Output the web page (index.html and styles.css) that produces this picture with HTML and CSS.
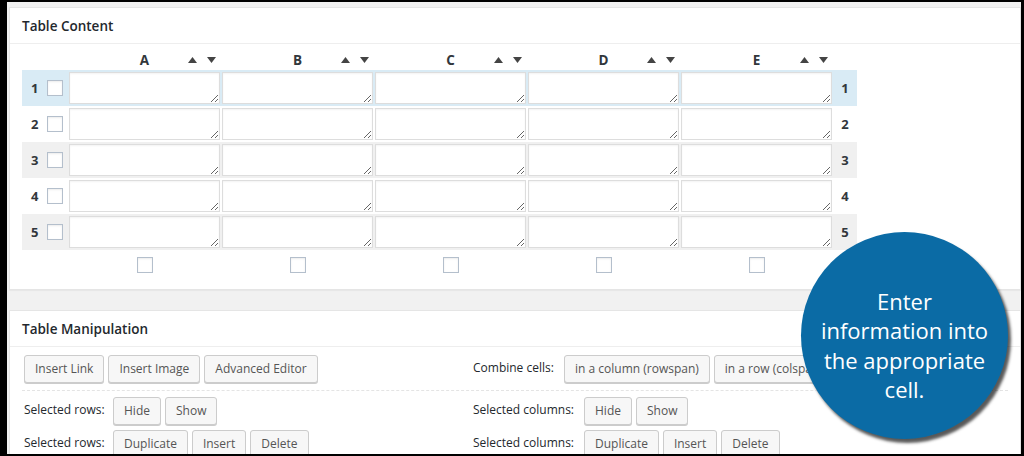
FILE: index.html
```html
<!DOCTYPE html>
<html lang="en">
<head>
<meta charset="utf-8">
<title>Table Content</title>
<link rel="stylesheet" href="styles.css">
</head>
<body>
<div class="frame">
  <section class="panel panel-content">
    <h2 class="panel-title">Table Content</h2>
    <div class="panel-body">
      <div class="tbl">
        <div class="head-row">
          <div class="lead"></div>
          <div class="col-head"><span class="letter">A</span><span class="sort"><svg width="9" height="6" viewBox="0 0 9 6"><polygon points="4.5,0 9,6 0,6"/></svg><svg width="9" height="6" viewBox="0 0 9 6"><polygon points="0,0 9,0 4.5,6"/></svg></span></div>
          <div class="col-head"><span class="letter">B</span><span class="sort"><svg width="9" height="6" viewBox="0 0 9 6"><polygon points="4.5,0 9,6 0,6"/></svg><svg width="9" height="6" viewBox="0 0 9 6"><polygon points="0,0 9,0 4.5,6"/></svg></span></div>
          <div class="col-head"><span class="letter">C</span><span class="sort"><svg width="9" height="6" viewBox="0 0 9 6"><polygon points="4.5,0 9,6 0,6"/></svg><svg width="9" height="6" viewBox="0 0 9 6"><polygon points="0,0 9,0 4.5,6"/></svg></span></div>
          <div class="col-head"><span class="letter">D</span><span class="sort"><svg width="9" height="6" viewBox="0 0 9 6"><polygon points="4.5,0 9,6 0,6"/></svg><svg width="9" height="6" viewBox="0 0 9 6"><polygon points="0,0 9,0 4.5,6"/></svg></span></div>
          <div class="col-head"><span class="letter">E</span><span class="sort"><svg width="9" height="6" viewBox="0 0 9 6"><polygon points="4.5,0 9,6 0,6"/></svg><svg width="9" height="6" viewBox="0 0 9 6"><polygon points="0,0 9,0 4.5,6"/></svg></span></div>
          <div class="tail"></div>
        </div>

        <div class="row row-active">
          <div class="lead"><span class="num">1</span><input type="checkbox" class="cb"></div>
          <div class="cell"><textarea></textarea></div>
          <div class="cell"><textarea></textarea></div>
          <div class="cell"><textarea></textarea></div>
          <div class="cell"><textarea></textarea></div>
          <div class="cell"><textarea></textarea></div>
          <div class="tail">1</div>
        </div>
        <div class="row">
          <div class="lead"><span class="num">2</span><input type="checkbox" class="cb"></div>
          <div class="cell"><textarea></textarea></div>
          <div class="cell"><textarea></textarea></div>
          <div class="cell"><textarea></textarea></div>
          <div class="cell"><textarea></textarea></div>
          <div class="cell"><textarea></textarea></div>
          <div class="tail">2</div>
        </div>
        <div class="row row-alt">
          <div class="lead"><span class="num">3</span><input type="checkbox" class="cb"></div>
          <div class="cell"><textarea></textarea></div>
          <div class="cell"><textarea></textarea></div>
          <div class="cell"><textarea></textarea></div>
          <div class="cell"><textarea></textarea></div>
          <div class="cell"><textarea></textarea></div>
          <div class="tail">3</div>
        </div>
        <div class="row">
          <div class="lead"><span class="num">4</span><input type="checkbox" class="cb"></div>
          <div class="cell"><textarea></textarea></div>
          <div class="cell"><textarea></textarea></div>
          <div class="cell"><textarea></textarea></div>
          <div class="cell"><textarea></textarea></div>
          <div class="cell"><textarea></textarea></div>
          <div class="tail">4</div>
        </div>
        <div class="row row-alt">
          <div class="lead"><span class="num">5</span><input type="checkbox" class="cb"></div>
          <div class="cell"><textarea></textarea></div>
          <div class="cell"><textarea></textarea></div>
          <div class="cell"><textarea></textarea></div>
          <div class="cell"><textarea></textarea></div>
          <div class="cell"><textarea></textarea></div>
          <div class="tail">5</div>
        </div>

        <div class="foot-row">
          <div class="lead"></div>
          <div class="foot-cell"><input type="checkbox" class="cb"></div>
          <div class="foot-cell"><input type="checkbox" class="cb"></div>
          <div class="foot-cell"><input type="checkbox" class="cb"></div>
          <div class="foot-cell"><input type="checkbox" class="cb"></div>
          <div class="foot-cell"><input type="checkbox" class="cb"></div>
          <div class="tail"></div>
        </div>
      </div>
    </div>
  </section>

  <section class="panel panel-manip">
    <h2 class="panel-title">Table Manipulation</h2>
    <div class="manip">
      <div class="manip-row manip-row-first">
        <div class="manip-col">
          <button class="btn">Insert Link</button>
          <button class="btn">Insert Image</button>
          <button class="btn">Advanced Editor</button>
        </div>
        <div class="manip-col">
          <span class="label label-combine">Combine cells:</span>
          <button class="btn">in a column (rowspan)</button>
          <button class="btn">in a row (colspan)</button>
        </div>
      </div>
      <div class="manip-row manip-row-second">
        <div class="manip-col">
          <span class="label label-rows">Selected rows:</span>
          <button class="btn">Hide</button>
          <button class="btn">Show</button>
        </div>
        <div class="manip-col">
          <span class="label label-cols">Selected columns:</span>
          <button class="btn">Hide</button>
          <button class="btn">Show</button>
        </div>
      </div>
      <div class="manip-row">
        <div class="manip-col">
          <span class="label label-rows">Selected rows:</span>
          <button class="btn">Duplicate</button>
          <button class="btn">Insert</button>
          <button class="btn">Delete</button>
        </div>
        <div class="manip-col">
          <span class="label label-cols">Selected columns:</span>
          <button class="btn">Duplicate</button>
          <button class="btn">Insert</button>
          <button class="btn">Delete</button>
        </div>
      </div>
    </div>
  </section>
</div>

<div class="callout">
  <p class="callout-text">Enter information into the appropriate cell.</p>
</div>
</body>
</html>
```

FILE: styles.css
```css
html, body {
  margin: 0;
  padding: 0;
  height: 100%;
}

body {
  background: #000;
  font-family: "Open Sans", "Noto Sans", sans-serif;
  overflow: hidden;
}

.frame {
  margin: 2px 3px 0 7px;
  height: 452px;
  background: #f1f1f1;
  padding: 5px 0 0 2px;
  box-sizing: border-box;
  overflow: hidden;
}

.panel {
  background: #fff;
  border: 1px solid #e5e5e5;
  box-shadow: 0 1px 1px rgba(0, 0, 0, 0.04);
}

.panel-title {
  margin: 0;
  height: 33px;
  line-height: 33px;
  padding: 2px 0 0 12px;
  font-size: 13.5px;
  font-weight: 600;
  color: #23282d;
  border-bottom: 1px solid #eeeeee;
}

.panel-body {
  padding: 6px 12px 16px;
}

/* ---------- table ---------- */

.tbl {
  width: 835px;
}

.head-row,
.row,
.foot-row {
  display: flex;
}

.lead {
  width: 46px;
  flex: none;
  box-sizing: border-box;
  display: flex;
  align-items: center;
  padding: 0 5px 0 9px;
}

.tail {
  width: 24px;
  flex: none;
  text-align: center;
  font-size: 13px;
  font-weight: 700;
  color: #32373c;
  line-height: 36px;
}

.head-row {
  height: 20px;
}

.col-head {
  width: 153px;
  flex: none;
  display: grid;
  grid-template-columns: 1fr auto 1fr;
  align-items: center;
}

.letter {
  grid-column: 2;
  font-size: 13.5px;
  font-weight: 700;
  color: #32373c;
  line-height: 20px;
}

.sort {
  grid-column: 3;
  justify-self: end;
  display: flex;
  gap: 10px;
  padding-right: 5px;
}

.sort svg {
  display: block;
  fill: #444;
}

.row {
  height: 36px;
  align-items: center;
}

.row-active {
  background: #d9ebf5;
}

.row-alt {
  background: #f0f0f0;
}

.num {
  flex: 1;
  font-size: 13px;
  font-weight: 700;
  color: #32373c;
}

.cb {
  -webkit-appearance: none;
  appearance: none;
  margin: 0;
  width: 16px;
  height: 16px;
  box-sizing: border-box;
  border: 1px solid #b4bfcc;
  background: #fff;
  box-shadow: inset 0 1px 2px rgba(0, 0, 0, 0.08);
}

.cell {
  width: 153px;
  flex: none;
  box-sizing: border-box;
  padding: 0 1px;
}

.cell textarea {
  display: block;
  margin: 0;
  width: 151px;
  height: 32px;
  box-sizing: border-box;
  border: 1px solid #dddddd;
  background: #fff;
  box-shadow: inset 0 1px 2px rgba(0, 0, 0, 0.05);
  padding: 2px 4px;
  font-family: inherit;
}

.foot-row {
  margin-top: 7px;
}

.foot-cell {
  width: 153px;
  flex: none;
  display: flex;
  justify-content: center;
}

/* ---------- manipulation ---------- */

.panel-manip {
  margin-top: 20px;
}

.manip {
  padding: 0 12px;
}

.manip-row {
  display: grid;
  grid-template-columns: 449px 1fr;
  padding-left: 2px;
}

.manip-row-first {
  padding-top: 8px;
  padding-bottom: 7px;
  border-bottom: 1px dashed #e4e4e4;
}

.manip-row-second {
  padding-top: 6px;
  padding-bottom: 5px;
}

.manip-col {
  display: flex;
  align-items: center;
  gap: 4px;
  white-space: nowrap;
}

.label {
  flex: none;
  font-size: 12px;
  color: #23282d;
  margin-top: -3px;
}

.label-rows {
  width: 85px;
}

.label-cols {
  width: 107px;
}

.label-combine {
  width: 87px;
}

.btn {
  flex: none;
  height: 28px;
  margin: 0;
  padding: 0 10px;
  border: 1px solid #cccccc;
  border-radius: 3px;
  background: #f7f7f7;
  box-shadow: 0 1px 0 #cccccc;
  color: #555555;
  font-family: inherit;
  font-size: 12px;
  line-height: 26px;
}

/* ---------- callout ---------- */

.callout {
  position: absolute;
  left: 801px;
  top: 232px;
  width: 207px;
  height: 207px;
  border-radius: 50%;
  background: #0b6ba5;
  box-shadow: 3px 4px 3px rgba(0, 0, 0, 0.65);
  display: flex;
  align-items: center;
  justify-content: center;
  box-sizing: border-box;
  padding-top: 20px;
}

.callout-text {
  margin: 0;
  width: 178px;
  text-align: center;
  color: #fff;
  font-family: "Open Sans", sans-serif;
  font-size: 22px;
  line-height: 29.5px;
}
```
